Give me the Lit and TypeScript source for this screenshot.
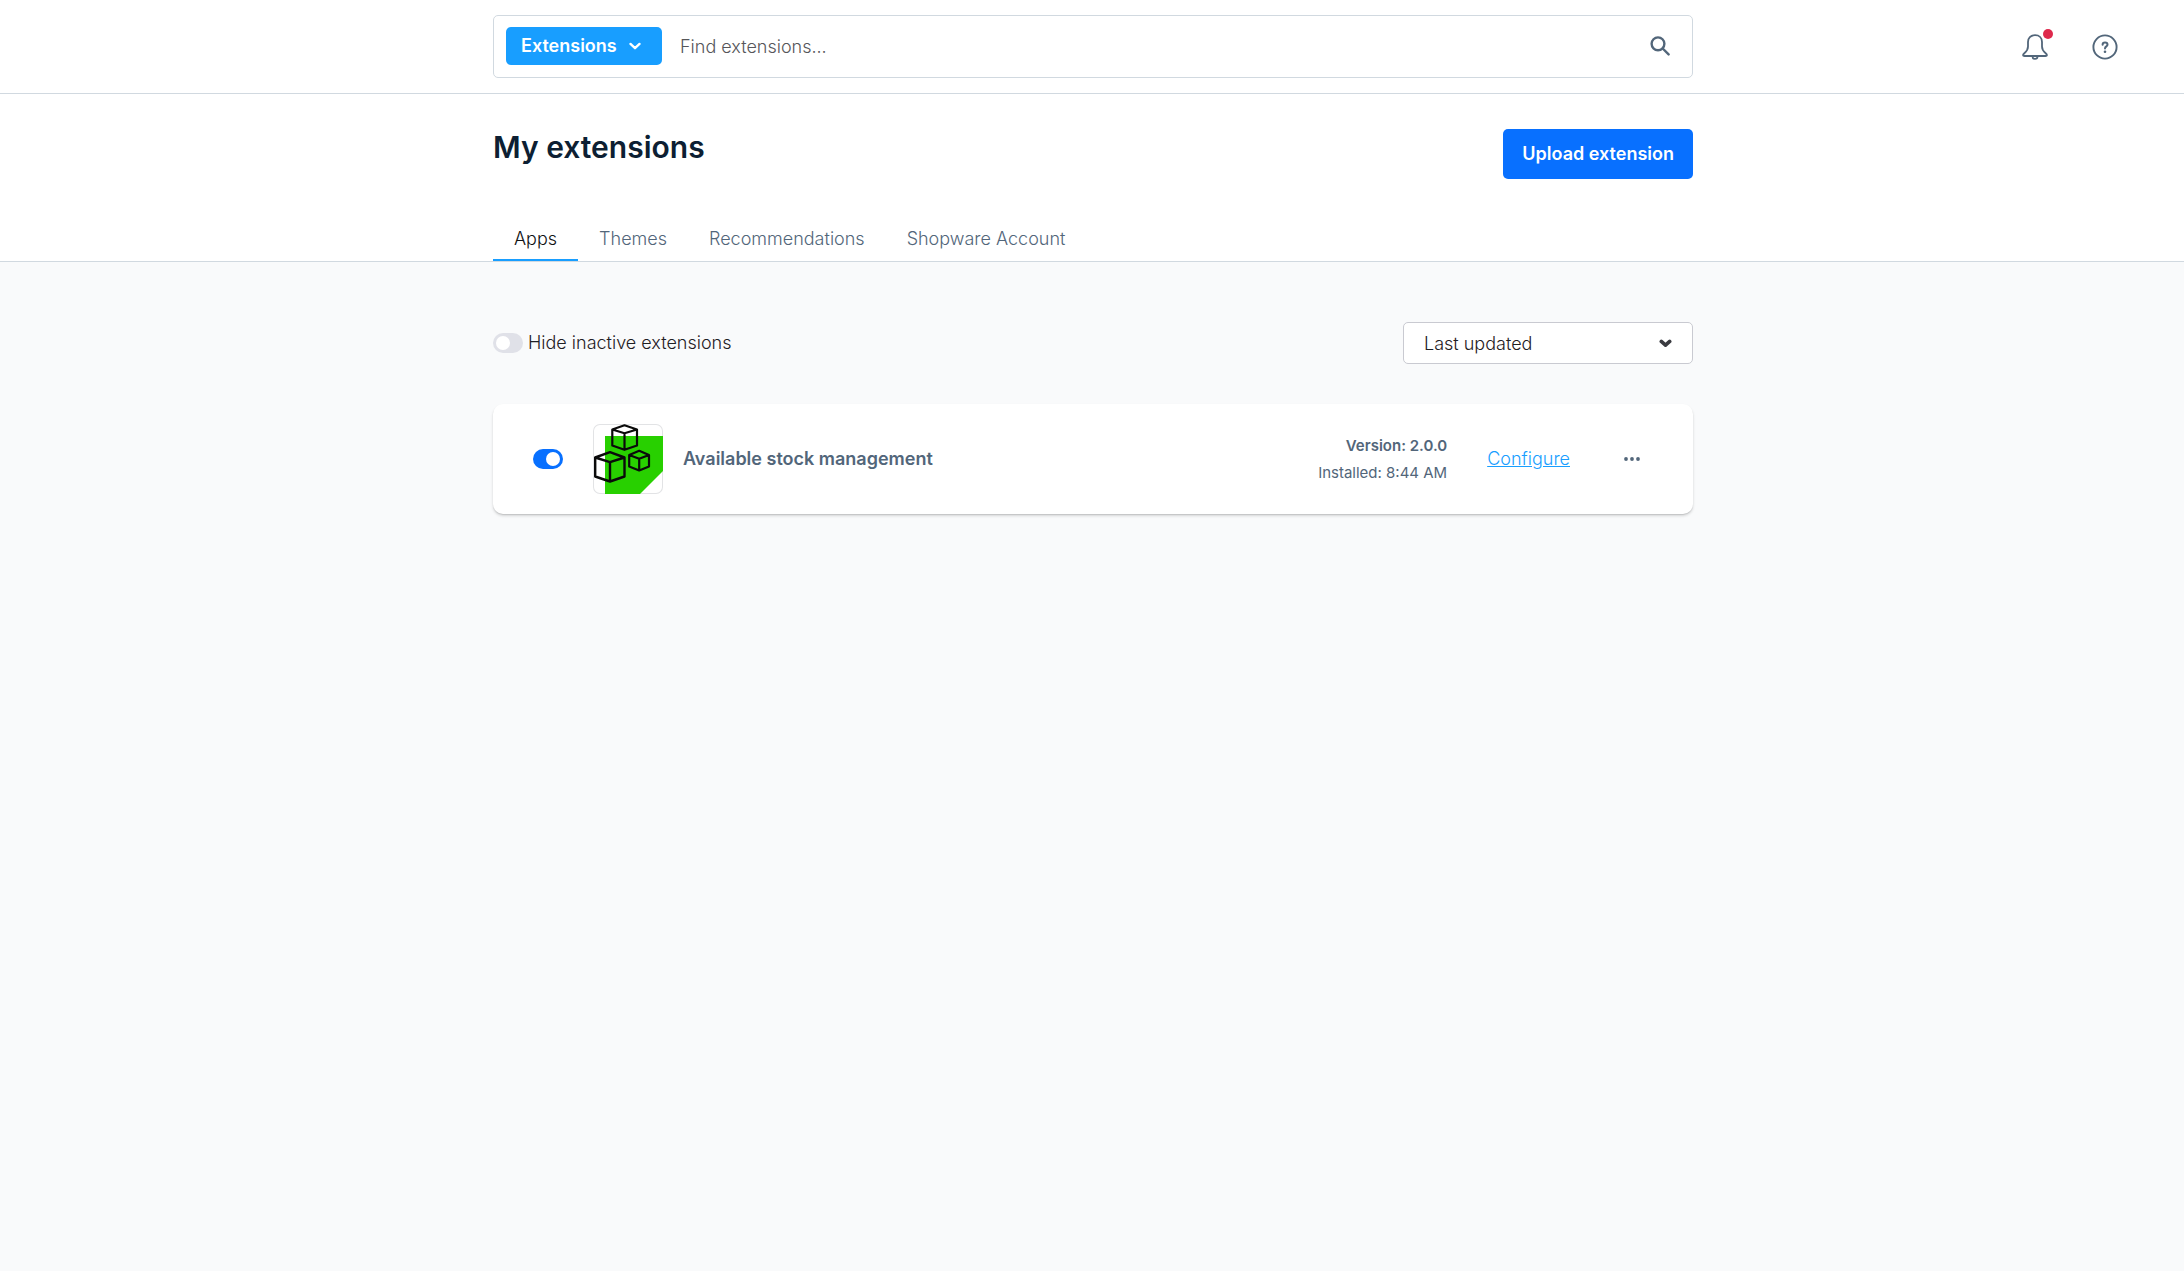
import { LitElement, html, css, svg } from "lit";
import { customElement, state } from "lit/decorators.js";

const tabs = ["Apps", "Themes", "Recommendations", "Shopware Account"];

const bellIcon = svg`<svg class="bell" width="26" height="26" viewBox="0 0 26 26" fill="none" stroke="currentColor" stroke-width="1.8" stroke-linecap="round" stroke-linejoin="round" aria-hidden="true">
  <path d="M13 1.200C8.600 1.200 6 4.200 6 8v4.500c0 3-1 4.500-3.400 6.500C.2 21 .8 22 2.500 22h21c1.700 0 2.300-1-.1-3C21 17 20 15.500 20 12.500V8c0-3.800-2.600-6.800-7-6.800z"/>
  <path d="M10.500 22.500c0 3.200 5 3.200 5 0"/>
</svg>`;

const helpIcon = svg`<svg width="26" height="26" viewBox="0 0 26 26" fill="none" stroke="currentColor" stroke-width="1.900" aria-hidden="true">
  <circle cx="13" cy="13" r="11.600"/>
  <path d="M10.600 10.700c0-3 4.900-3 4.900 0 0 1.700-2.500 1.600-2.500 3.700" stroke-width="2" stroke-linecap="round"/>
  <circle cx="13" cy="17.700" r="1.300" fill="currentColor" stroke="none"/>
</svg>`;

const searchIcon = svg`<svg width="20" height="20" viewBox="0 0 20 20" fill="none" stroke="currentColor" stroke-width="2.400" stroke-linecap="round" aria-hidden="true">
  <circle cx="8" cy="7.800" r="6.400"/>
  <path d="M12.700 12.500L18.600 18.400"/>
</svg>`;

const boxesIcon = svg`<svg class="logo" width="70" height="70" viewBox="0 0 70 70" fill="none" stroke="#0a0a0a" stroke-width="2.200" stroke-linejoin="round" aria-hidden="true">
  <path d="M12 12H70V47L47 70H12z" fill="#28d000" stroke="none"/>
  <path d="M31.500 1.300L19.300 5.500V21.500L31.500 25.800L44 21.500V5.500zM19.300 5.500L31.500 9.300L44 5.500M31.500 9.300V25.800"/>
  <path d="M17 28.200L2.200 33.500V52.500L17 57.500L31.500 52.500V33.500zM2.200 33.500L17 38.200L31.500 33.500M17 38.200V57.500" stroke-width="2.400"/>
  <path d="M46.200 26.800L36.200 31V42.500L46.200 46.500L56 42.500V31zM36.200 31L46.200 34.800L56 31M46.200 34.800V46.500"/>
</svg>`;

@customElement("app-root")
export class AppRoot extends LitElement {
  @state() private active = 0;

  static styles = css`
    :host {
      display: block;
      min-height: 100vh;
      background: #f9fafb;
      color: #52667a;
      font: 350 18px/24px Inter, "Liberation Sans", sans-serif;
    }
    * { box-sizing: border-box; }
    button, input, select { font: inherit; color: inherit; margin: 0; }
    button { border: 0; background: none; padding: 0; cursor: pointer; }
    svg { display: block; flex: none; }

    .topbar {
      display: grid;
      grid-template-columns: 1fr minmax(0, 1200px) 1fr;
      align-items: center;
      padding: 15px 0 15px 2px;
      border-bottom: 1px solid #d1d9e0;
      background: #fff;
    }
    .search {
      grid-column: 2;
      display: flex;
      align-items: center;
      padding: 11px 22px 12px 12px;
      border: 1px solid #d1d9e0;
      border-radius: 5px;
    }
    .scope {
      display: flex;
      align-items: center;
      gap: 12px;
      width: 156px;
      height: 38px;
      padding: 0 15px;
      border-radius: 5px;
      background: #189eff;
      color: #fff;
      font-weight: 600;
    }
    .query {
      flex: 1;
      min-width: 0;
      height: 38px;
      padding: 0 18px;
      border: 0;
      outline: 0;
      background: none;
    }
    .query::placeholder { color: #56565a; opacity: 1; }
    .tools {
      display: flex;
      justify-content: flex-end;
      gap: 44px;
      padding-right: 66px;
    }
    .tool { position: relative; }
    .badge {
      position: absolute;
      top: -5px;
      right: -5px;
      width: 10px;
      height: 10px;
      border-radius: 50%;
      background: #de294c;
    }

    .pagehead {
      display: flex;
      justify-content: center;
      padding-left: 2px;
      border-bottom: 1px solid #d1d9e0;
      background: #fff;
    }
    .inner { width: 100%; max-width: 1200px; }
    .titlerow {
      display: flex;
      justify-content: space-between;
      align-items: flex-start;
      padding-top: 35px;
    }
    h1 {
      margin: 0;
      color: #0d1f33;
      font-size: 30px;
      line-height: 36px;
      font-weight: 600;
    }
    .upload {
      height: 50px;
      padding: 0 19px;
      border-radius: 5px;
      background: #0870ff;
      color: #fff;
      font-weight: 600;
    }
    .tabs { display: flex; padding-top: 40px; }
    .tab {
      height: 42px;
      padding: 0 21px;
      border-bottom: 2px solid transparent;
    }
    .tab.active { border-color: #189eff; color: #101214; }

    .content {
      display: flex;
      justify-content: center;
      padding: 60px 0 60px 2px;
    }
    .filters {
      display: flex;
      justify-content: space-between;
      align-items: center;
      margin-bottom: 40px;
      color: #1f2024;
    }
    .hide { display: flex; align-items: center; gap: 5px; }
    .switch {
      appearance: none;
      display: flex;
      flex: none;
      width: 30px;
      height: 20px;
      padding: 3px;
      border-radius: 10px;
      background: #e0e1e8;
    }
    .switch::before {
      content: "";
      width: 14px;
      height: 14px;
      border-radius: 50%;
      background: #fff;
    }
    .switch:checked { justify-content: flex-end; background: #0870ff; }
    .sort {
      display: grid;
      align-items: center;
      width: 290px;
    }
    .sort select {
      grid-area: 1 / 1;
      appearance: none;
      width: 100%;
      height: 42px;
      padding: 2px 20px 0;
      border: 1px solid #c9cad1;
      border-radius: 5px;
      background: #fff;
    }
    .sort svg {
      grid-area: 1 / 1;
      justify-self: end;
      margin-right: 21px;
      pointer-events: none;
    }
    .card {
      display: flex;
      align-items: center;
      padding: 20px 40px;
      border-radius: 10px;
      background: #fff;
      box-shadow: 0 1px 1px rgba(0, 0, 0, 0.1), 0 2px 3px rgba(0, 0, 0, 0.14);
    }
    .thumb {
      width: 70px;
      height: 70px;
      margin: 0 20px 0 30px;
      border-radius: 7px;
      box-shadow: inset 0 0 0 1px #e2e3e5;
      overflow: hidden;
    }
    .name { flex: 1; margin: 0; font: inherit; font-weight: 600; }
    .meta {
      margin-right: 40px;
      font-size: 15px;
      line-height: 27px;
      text-align: right;
      font-weight: 400;
    }
    .version { font-weight: 600; }
    a { color: #189eff; }
    .more { margin: 0 12px 0 53px; }
  `;

  render() {
    return html`
      <header class="topbar">
        <div class="search" role="search">
          <button class="scope">
            Extensions
            <svg width="12" height="8" viewBox="0 0 12 8" fill="none" stroke="currentColor" stroke-width="2.300" stroke-linecap="round" stroke-linejoin="round" aria-hidden="true"><path d="M1.500 1.900L6 6.200L10.500 1.900" /></svg>
          </button>
          <input class="query" type="text" aria-label="Find extensions" placeholder="Find extensions..." />
          <button aria-label="Search">${searchIcon}</button>
        </div>
        <div class="tools">
          <button class="tool" aria-label="Notifications">${bellIcon}<span class="badge"></span></button>
          <button class="tool" aria-label="Help">${helpIcon}</button>
        </div>
      </header>

      <section class="pagehead">
        <div class="inner">
          <div class="titlerow">
            <h1>My extensions</h1>
            <button class="upload">Upload extension</button>
          </div>
          <nav class="tabs" role="tablist">
            ${tabs.map(
              (t, i) => html`<button
                class="tab ${i === this.active ? "active" : ""}"
                role="tab"
                aria-selected=${i === this.active}
                @click=${() => (this.active = i)}
              >${t}</button>`
            )}
          </nav>
        </div>
      </section>

      <main class="content">
        <div class="inner">
          <div class="filters">
            <label class="hide"><input class="switch" type="checkbox" />Hide inactive extensions</label>
            <div class="sort">
              <select aria-label="Sort by"><option>Last updated</option></select>
              <svg width="13" height="9" viewBox="0 0 13 9" fill="none" stroke="#3a3b40" stroke-width="3.600" stroke-linecap="round" stroke-linejoin="round" aria-hidden="true"><path d="M2.300 2.400L6.500 6.200L10.700 2.400" /></svg>
            </div>
          </div>
          <article class="card">
            <input class="switch" type="checkbox" checked aria-label="Available stock management active" />
            <div class="thumb">${boxesIcon}</div>
            <h2 class="name">Available stock management</h2>
            <div class="meta">
              <div class="version">Version: 2.0.0</div>
              <div>Installed: 8:44 AM</div>
            </div>
            <a href="#configure">Configure</a>
            <button class="more" aria-label="More actions">
              <svg width="18" height="6" viewBox="0 0 18 6" fill="currentColor" aria-hidden="true"><circle cx="3" cy="3" r="1.900" /><circle cx="9" cy="3" r="1.900" /><circle cx="15" cy="3" r="1.900" /></svg>
            </button>
          </article>
        </div>
      </main>
    `;
  }
}
